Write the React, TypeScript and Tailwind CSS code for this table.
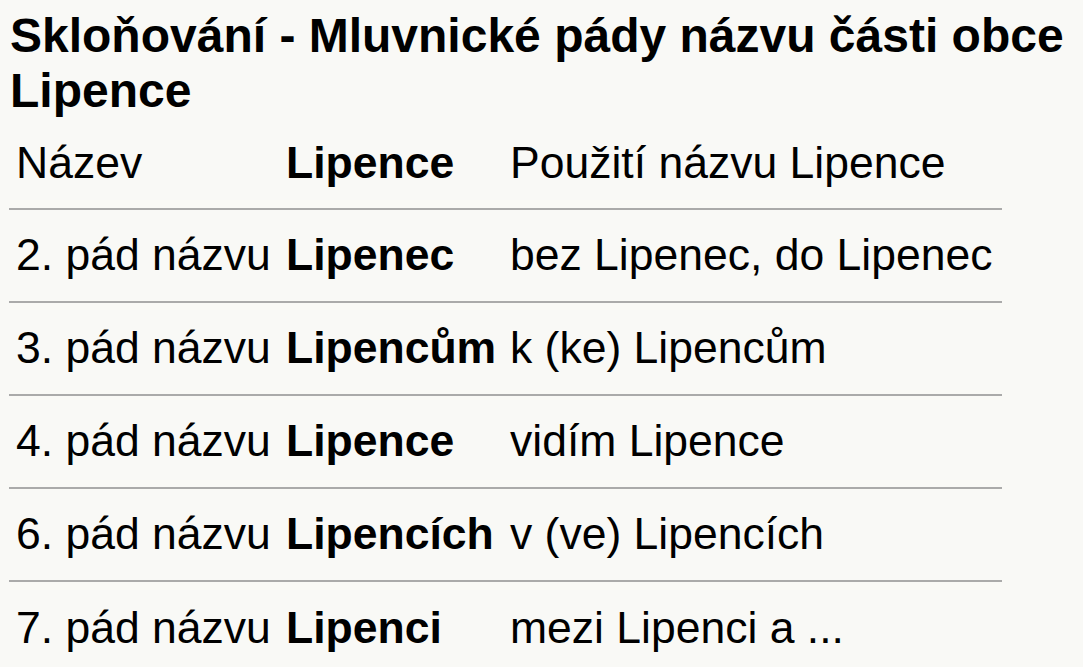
const rows = [
  { label: "2. pád názvu", name: "Lipenec", usage: "bez Lipenec, do Lipenec" },
  { label: "3. pád názvu", name: "Lipencům", usage: "k (ke) Lipencům" },
  { label: "4. pád názvu", name: "Lipence", usage: "vidím Lipence" },
  { label: "6. pád názvu", name: "Lipencích", usage: "v (ve) Lipencích" },
  { label: "7. pád názvu", name: "Lipenci", usage: "mezi Lipenci a ..." },
];

export default function App() {
  return (
    <div className="min-h-screen bg-[#f9f9f6] text-black font-['Liberation_Sans',Arial,sans-serif]">
      <h1 className="px-[10px] pt-[8px] text-[48px] leading-[55px] font-bold">
        Skloňování - Mluvnické pády názvu části obce Lipence
      </h1>
      <table className="ml-[9px] w-[993px] table-fixed border-collapse text-[44.5px]">
        <colgroup>
          <col className="w-[270px]" />
          <col className="w-[224px]" />
          <col />
        </colgroup>
        <tbody>
          <tr>
            <td className="px-[7px] h-[91px] whitespace-nowrap">Název</td>
            <td className="px-[7px] font-bold whitespace-nowrap">Lipence</td>
            <td className="px-[7px] whitespace-nowrap">Použití názvu Lipence</td>
          </tr>
          {rows.map((r) => (
            <tr key={r.label} className="border-t-2 border-[#aaaaaa]">
              <td className="px-[7px] h-[93px] whitespace-nowrap">{r.label}</td>
              <td className="px-[7px] font-bold whitespace-nowrap">{r.name}</td>
              <td className="px-[7px] whitespace-nowrap">{r.usage}</td>
            </tr>
          ))}
        </tbody>
      </table>
    </div>
  );
}
